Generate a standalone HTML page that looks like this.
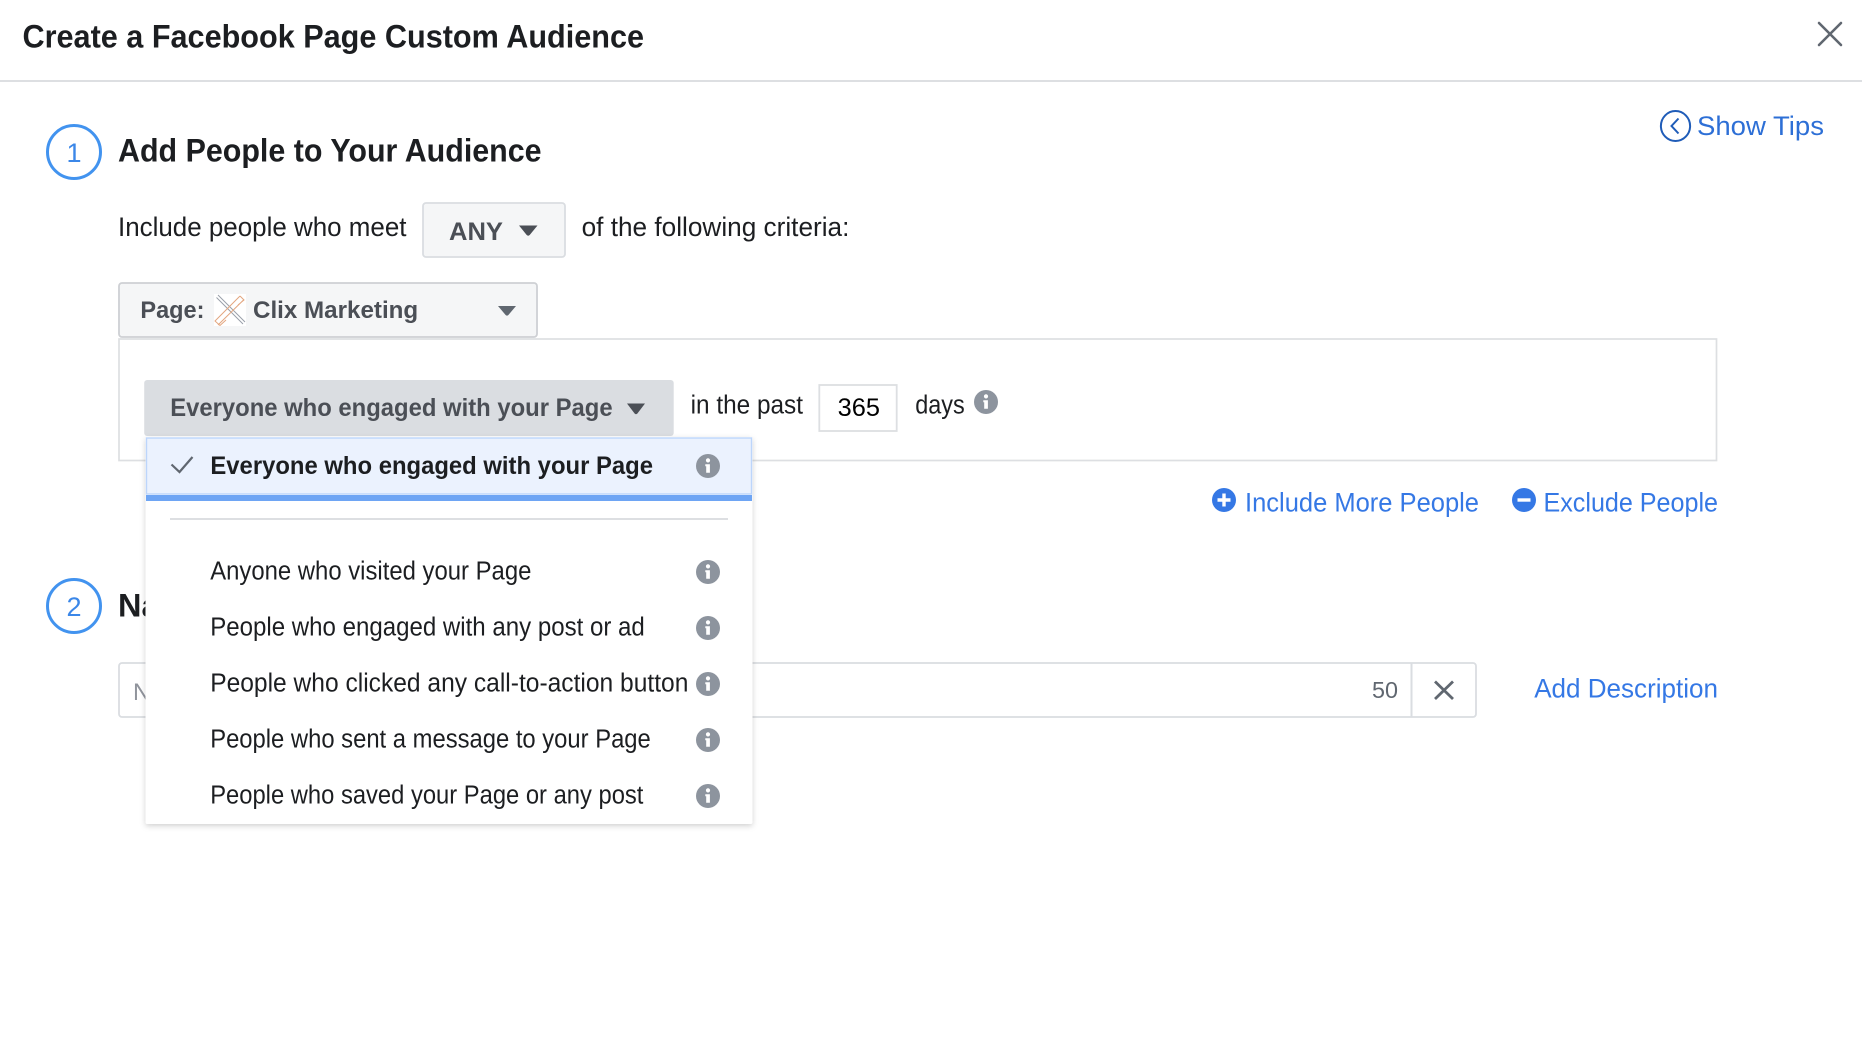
<!DOCTYPE html>
<html>
<head>
<meta charset="utf-8">
<title>Create a Facebook Page Custom Audience</title>
<style>
html,body{margin:0;padding:0;background:#fff;width:1862px;height:1052px;overflow:hidden}
svg{display:block}
text{font-family:"Liberation Sans",Arial,sans-serif;white-space:pre}
.b{font-weight:700}
.d{fill:#1c1e21}
.g{fill:#4b4f56}
.l{fill:#3578e5}
</style>
</head>
<body>
<svg width="1862" height="1052" viewBox="0 0 1862 1052" xmlns="http://www.w3.org/2000/svg">
<defs>
<symbol id="info" viewBox="0 0 24 24">
<circle cx="12" cy="12" r="12" fill="#8d949e"/>
<circle cx="12" cy="6.4" r="2.1" fill="#fff"/>
<path d="M9.3 10.2h4.6v8.6h-3.7v-6.6h-.9z" fill="#fff"/>
</symbol>
<filter id="sh" x="-5%" y="-5%" width="110%" height="110%">
<feDropShadow dx="0" dy="2" stdDeviation="3" flood-color="#000" flood-opacity=".18"/>
</filter>
</defs>

<rect width="1862" height="1052" fill="#fff"/>

<!-- Header -->
<text x="22.5" y="47.7" font-size="32.5" class="b" fill="#1c1e21" textLength="621.5" lengthAdjust="spacingAndGlyphs">Create a Facebook Page Custom Audience</text>
<path d="M1819 23L1841 45M1841 23L1819 45" stroke="#606770" stroke-width="2.6" fill="none" stroke-linecap="round"/>
<rect x="0" y="80" width="1862" height="2" fill="#dddfe2"/>

<!-- Show tips -->
<ellipse cx="1675.5" cy="126" rx="14.6" ry="15" fill="none" stroke="#1f5cb8" stroke-width="2"/>
<path d="M1678.5 118.5L1671.5 126L1678.5 133.5" fill="none" stroke="#1f5cb8" stroke-width="2"/>
<text x="1697" y="135" font-size="26.5" fill="#2d6fd6" textLength="127" lengthAdjust="spacingAndGlyphs">Show Tips</text>

<!-- Step 1 -->
<circle cx="74" cy="152" r="26.5" fill="none" stroke="#4293ef" stroke-width="3"/>
<text x="74" y="162" font-size="27" fill="#3b87e8" text-anchor="middle">1</text>
<text x="118" y="161.3" font-size="32.5" class="b d" textLength="423.6" lengthAdjust="spacingAndGlyphs">Add People to Your Audience</text>

<text x="118" y="236" font-size="26.5" class="d" textLength="288.5" lengthAdjust="spacingAndGlyphs">Include people who meet</text>
<rect x="423" y="203" width="142" height="54" rx="3" fill="#f5f6f7" stroke="#dadde1" stroke-width="1.8"/>
<text x="449" y="240" font-size="25" class="b g" textLength="54" lengthAdjust="spacingAndGlyphs">ANY</text>
<path d="M519 225.5h18.5l-7.8 9.5q-1.5 1.4-3 0z" fill="#4b4f56"/>
<text x="581.6" y="236" font-size="26.5" class="d" textLength="267.8" lengthAdjust="spacingAndGlyphs">of the following criteria:</text>

<!-- Criteria box -->
<rect x="119" y="339" width="1597.5" height="121.5" fill="#fff" stroke="#dddfe2" stroke-width="1.7"/>

<!-- Page selector -->
<rect x="119" y="283" width="418" height="54" rx="3" fill="#f5f6f7" stroke="#ced0d4" stroke-width="1.8"/>
<text x="140.4" y="318" font-size="24.5" class="b g" textLength="64" lengthAdjust="spacingAndGlyphs">Page:</text>
<rect x="214" y="294" width="32" height="32" fill="#fff"/>
<g fill="none" stroke-width="1">
<path d="M218 295L245 322M216.5 297.5L243 324" stroke="#9aa0aa"/>
<path d="M240 296L215 321L220 325.5L226 320M243.5 300L218 325M240 296L244 300L238 305" stroke="#e3a67f"/>
</g>
<text x="253" y="318" font-size="24.5" class="b g" textLength="165.2" lengthAdjust="spacingAndGlyphs">Clix Marketing</text>
<path d="M498 306h18l-7.6 9q-1.4 1.2-2.8 0z" fill="#606770"/>

<!-- Engagement selector -->
<rect x="144.2" y="380" width="529.5" height="56" rx="3" fill="#dadde1"/>
<text x="170.2" y="416" font-size="25" class="b g" textLength="442.4" lengthAdjust="spacingAndGlyphs">Everyone who engaged with your Page</text>
<path d="M627 403.5h18l-7.6 10q-1.4 1.4-2.8 0z" fill="#4b4f56"/>

<text x="690.6" y="413.3" font-size="25.5" class="d" textLength="112.4" lengthAdjust="spacingAndGlyphs">in the past</text>
<rect x="819.3" y="385" width="77.4" height="46" fill="#fff" stroke="#dddfe2" stroke-width="1.8"/>
<text x="837.7" y="416" font-size="25" fill="#000" textLength="42.3" lengthAdjust="spacingAndGlyphs">365</text>
<text x="915.2" y="413.3" font-size="25.5" class="d" textLength="49.5" lengthAdjust="spacingAndGlyphs">days</text>
<use href="#info" x="974" y="390" width="24" height="24"/>

<!-- Include / exclude -->
<circle cx="1224" cy="500" r="12" fill="#3578e5"/>
<path d="M1224 493.5v13M1217.5 500h13" stroke="#fff" stroke-width="3.4" fill="none"/>
<text x="1245" y="511.7" font-size="26.5" class="l" textLength="234" lengthAdjust="spacingAndGlyphs">Include More People</text>
<circle cx="1524" cy="500" r="12" fill="#3578e5"/>
<path d="M1517.5 500h13" stroke="#fff" stroke-width="3.4" fill="none"/>
<text x="1543.5" y="511.7" font-size="26.5" class="l" textLength="174.5" lengthAdjust="spacingAndGlyphs">Exclude People</text>

<!-- Step 2 -->
<circle cx="74" cy="606" r="26.5" fill="none" stroke="#4293ef" stroke-width="3"/>
<text x="74" y="616" font-size="27" fill="#3b87e8" text-anchor="middle">2</text>
<text x="118" y="616.7" font-size="32.5" class="b d">Name Your Audience</text>

<rect x="119" y="663" width="1357" height="54" rx="3" fill="#fff" stroke="#dadde1" stroke-width="1.8"/>
<text x="133" y="700" font-size="24" fill="#90949c">Name</text>
<rect x="1410.5" y="663" width="2" height="54" fill="#dadde1"/>
<text x="1372" y="698" font-size="23" fill="#606770" textLength="26" lengthAdjust="spacingAndGlyphs">50</text>
<path d="M1435 681.5L1453 699M1453 681.5L1435 699" stroke="#606770" stroke-width="2.8" fill="none"/>
<text x="1534.2" y="697.7" font-size="26.5" class="l" textLength="183.8" lengthAdjust="spacingAndGlyphs">Add Description</text>

<!-- Dropdown -->
<rect x="145.5" y="437" width="607" height="387" rx="2" fill="#fff" filter="url(#sh)"/>
<rect x="146.5" y="438" width="605" height="56" fill="#ebf2fe" stroke="#bcd5fb" stroke-width="1.4"/>
<rect x="146" y="495" width="606" height="6" fill="#6ea5f4"/>
<path d="M171.5 464.5L179.5 472L192.5 457" fill="none" stroke="#606770" stroke-width="2.2"/>
<text x="210.4" y="474" font-size="25" class="b d" textLength="442.6" lengthAdjust="spacingAndGlyphs">Everyone who engaged with your Page</text>
<use href="#info" x="696" y="454" width="24" height="24"/>
<rect x="170" y="518" width="558" height="2" fill="#dddfe2"/>

<text x="210.2" y="579.6" font-size="25.5" class="d" textLength="321.2" lengthAdjust="spacingAndGlyphs">Anyone who visited your Page</text>
<use href="#info" x="696" y="560" width="24" height="24"/>
<text x="210.2" y="635.6" font-size="25.5" class="d" textLength="434.6" lengthAdjust="spacingAndGlyphs">People who engaged with any post or ad</text>
<use href="#info" x="696" y="616" width="24" height="24"/>
<text x="210.2" y="691.6" font-size="25.5" class="d" textLength="478.2" lengthAdjust="spacingAndGlyphs">People who clicked any call-to-action button</text>
<use href="#info" x="696" y="672" width="24" height="24"/>
<text x="210.2" y="747.6" font-size="25.5" class="d" textLength="440.6" lengthAdjust="spacingAndGlyphs">People who sent a message to your Page</text>
<use href="#info" x="696" y="728" width="24" height="24"/>
<text x="210.2" y="803.6" font-size="25.5" class="d" textLength="433.2" lengthAdjust="spacingAndGlyphs">People who saved your Page or any post</text>
<use href="#info" x="696" y="784" width="24" height="24"/>
</svg>
</body>
</html>
